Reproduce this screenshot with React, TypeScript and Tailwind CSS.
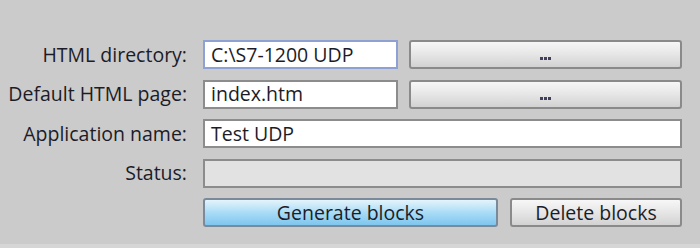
import React from "react";

const FONT = { fontFamily: '"Open Sans", "Noto Sans", "DejaVu Sans", sans-serif' };

const labelCls = "flex h-[29px] items-center justify-end pr-[16px] text-[19.5px] text-[#1c1c28] leading-none";
const fieldCls =
  "flex h-[29px] items-center bg-white border-2 border-[#8c8c8c] px-[6px] text-[19.5px] text-[#1c1c28] leading-none";
const grayBtn =
  "flex h-[29px] items-center justify-center rounded-[3px] border-2 border-[#8a8a8a] bg-gradient-to-b from-[#f7f7f7] via-[#e6e6e6] to-[#d2d2d2] text-[19.5px] text-[#1c1c28] leading-none";

function Dots() {
  return (
    <span className="mt-[8px] flex gap-[1px]">
      <span className="h-[3px] w-[3px] bg-[#40405a]" />
      <span className="h-[3px] w-[3px] bg-[#40405a]" />
      <span className="h-[3px] w-[3px] bg-[#40405a]" />
    </span>
  );
}

export default function App() {
  return (
    <div
      style={FONT}
      className="h-[248px] w-[700px] overflow-hidden bg-[#cbcbcb] pt-[40px] border-b-[4px] border-[#d6d6d6]"
    >
      <div className="grid grid-cols-[203px_195px_284px] gap-y-[10.5px]">
        <div className={labelCls}>HTML directory:</div>
        <div className={fieldCls + " border-[#8fa0d2]"}>C:\S7-1200 UDP</div>
        <div className="pl-[11px]">
          <div className={grayBtn}>
            <Dots />
          </div>
        </div>

        <div className={labelCls}>Default HTML page:</div>
        <div className={fieldCls}>index.htm</div>
        <div className="pl-[11px]">
          <div className={grayBtn}>
            <Dots />
          </div>
        </div>

        <div className={labelCls}>Application name:</div>
        <div className={fieldCls + " col-span-2"}>Test UDP</div>

        <div className={labelCls}>Status:</div>
        <div className="col-span-2 h-[29px] border-2 border-[#8c8c8c] bg-[#e2e2e2]" />

        <div />
        <div className="col-span-2 flex gap-[12px]">
          <div className="flex h-[29px] w-[295px] items-center justify-center rounded-[3px] border-2 border-[#7a8a9a] bg-gradient-to-b from-[#e4f4fc] via-[#a9dcf5] to-[#7dc6ef] text-[19.5px] text-[#1c1c28] leading-none">
            Generate blocks
          </div>
          <div className={grayBtn + " w-[172px]"}>Delete blocks</div>
        </div>
      </div>
    </div>
  );
}
